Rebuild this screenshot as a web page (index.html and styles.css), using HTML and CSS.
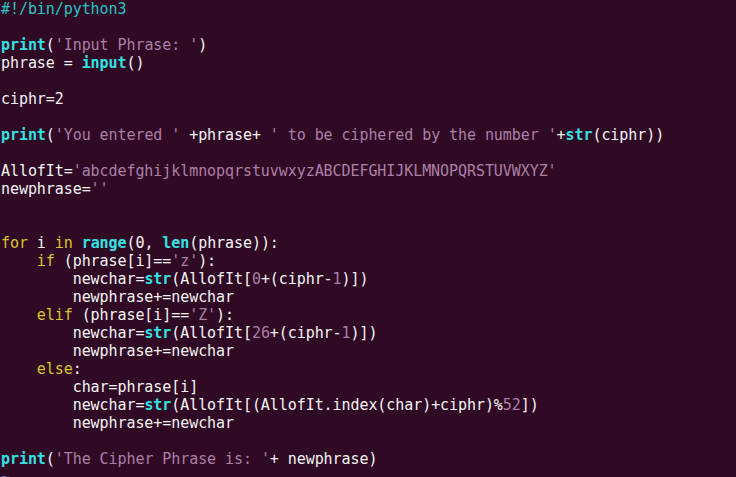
FILE: index.html
```html
<!DOCTYPE html>
<html>
<head>
<meta charset="utf-8">
<link rel="stylesheet" href="styles.css">
</head>
<body>
<pre class="code"><span class="cm">#!/bin/python3</span>

<span class="fn">print</span>(<span class="st">'Input Phrase: '</span>)
phrase = <span class="fn">input</span>()

ciphr=2

<span class="fn">print</span>(<span class="st">'You entered '</span> +phrase+ <span class="st">' to be ciphered by the number '</span>+<span class="fn">str</span>(ciphr))

AllofIt=<span class="st">'abcdefghijklmnopqrstuvwxyzABCDEFGHIJKLMNOPQRSTUVWXYZ'</span>
newphrase=<span class="st">''</span>


<span class="kw">for</span> i <span class="kw">in</span> <span class="fn">range</span>(0, <span class="fn">len</span>(phrase)):
    <span class="kw">if</span> (phrase[i]==<span class="st">'z'</span>):
        newchar=<span class="fn">str</span>(AllofIt[<span class="st">0</span>+(ciphr-<span class="st">1</span>)])
        newphrase+=newchar
    <span class="kw">elif</span> (phrase[i]==<span class="st">'Z'</span>):
        newchar=<span class="fn">str</span>(AllofIt[<span class="st">26</span>+(ciphr-<span class="st">1</span>)])
        newphrase+=newchar
    <span class="kw">else</span>:
        char=phrase[i]
        newchar=<span class="fn">str</span>(AllofIt[(AllofIt.index(char)+ciphr)%<span class="st">52</span>])
        newphrase+=newchar

<span class="fn">print</span>(<span class="st">'The Cipher Phrase is: '</span>+ newphrase)
<span class="tl">~</span></pre>
</body>
</html>
```

FILE: styles.css
```css
html, body {
  margin: 0;
  padding: 0;
  background: #300a24;
  height: 100%;
  overflow: hidden;
}
.code {
  margin: 0;
  padding: 0 0 0 1px;
  font-family: "DejaVu Sans Mono", "Liberation Mono", monospace;
  font-size: 15px;
  line-height: 18px;
  letter-spacing: -0.07px;
  color: #f4f4f4;
  white-space: pre;
}
.cm { color: #2cc4c4; }
.fn { color: #34e2e2; font-weight: bold; }
.st { color: #ad7fa8; }
.kw { color: #dcc52c; }
.tl { color: #5f7fd0; }
```
